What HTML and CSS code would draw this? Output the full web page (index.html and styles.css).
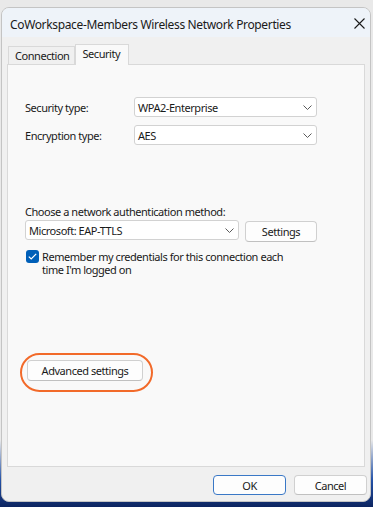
FILE: index.html
```html
<!DOCTYPE html>
<html>
<head>
<meta charset="utf-8">
<link rel="stylesheet" href="styles.css">
</head>
<body>
<div class="window">
  <div class="titlebar">
    <span class="title">CoWorkspace-Members Wireless Network Properties</span>
    <svg class="close" width="11" height="11" viewBox="0 0 11 11"><path d="M0.5 0.5 L10.5 10.5 M10.5 0.5 L0.5 10.5" stroke="#1b1b1b" stroke-width="1.1" fill="none"/></svg>
  </div>
  <div class="tabs">
    <div class="tab">Connection</div>
    <div class="tab active">Security</div>
  </div>
  <div class="panel">
    <div class="field-row">
      <span class="field-label">Security type:</span>
      <div class="select"><span>WPA2-Enterprise</span><svg class="chev" width="9" height="5" viewBox="0 0 9 5"><path d="M0.5 0.5 L4.5 4.5 L8.5 0.5" stroke="#5a5a5a" stroke-width="1" fill="none"/></svg></div>
    </div>
    <div class="field-row">
      <span class="field-label">Encryption type:</span>
      <div class="select"><span>AES</span><svg class="chev" width="9" height="5" viewBox="0 0 9 5"><path d="M0.5 0.5 L4.5 4.5 L8.5 0.5" stroke="#5a5a5a" stroke-width="1" fill="none"/></svg></div>
    </div>
    <div class="auth">
      <div class="auth-label">Choose a network authentication method:</div>
      <div class="auth-row">
        <div class="select wide"><span>Microsoft: EAP-TTLS</span><svg class="chev" width="9" height="5" viewBox="0 0 9 5"><path d="M0.5 0.5 L4.5 4.5 L8.5 0.5" stroke="#5a5a5a" stroke-width="1" fill="none"/></svg></div>
        <button class="btn settings">Settings</button>
      </div>
      <div class="check-row">
        <span class="checkbox"><svg width="9" height="7" viewBox="0 0 9 7"><path d="M0.8 3.6 L3.2 6 L8.2 0.9" stroke="#fff" stroke-width="1.2" fill="none"/></svg></span>
        <span class="check-text">Remember my credentials for this connection each time I'm logged on</span>
      </div>
    </div>
    <div class="advanced-wrap">
      <div class="highlight"><button class="btn advanced">Advanced settings</button></div>
    </div>
  </div>
  <div class="footer">
    <button class="btn primary">OK</button>
    <button class="btn">Cancel</button>
  </div>
</div>
</body>
</html>
```
FILE: styles.css
```css
html, body {
  margin: 0;
  padding: 0;
}
body {
  width: 373px;
  height: 507px;
  overflow: hidden;
  background: linear-gradient(to bottom, #e9e9e9 0, #e9e9e9 440px, #2452a8 480px, #0c2460 507px);
  font-family: "Noto Sans", "Open Sans", sans-serif;
  font-size: 11px;
  letter-spacing: -0.45px;
  color: #1a1a1a;
}
.window {
  box-sizing: border-box;
  margin: 7px 2px 0 1px;
  width: 370px;
  height: 495px;
  border: 1px solid #c4c4c4;
  border-radius: 8px;
  background: #f0f0f0;
  overflow: hidden;
  display: flex;
  flex-direction: column;
}
.titlebar {
  height: 29px;
  flex: none;
  background: #eef3f9;
  display: flex;
  align-items: center;
  justify-content: space-between;
  padding: 0 5px 0 8px;
}
.title {
  font-size: 12px;
  letter-spacing: -0.35px;
  color: #1a1a1a;
  padding-top: 3px;
}
.close {
  display: block;
  margin-top: 1px;
}
.tabs {
  height: 27px;
  flex: none;
  display: flex;
  align-items: flex-end;
  padding-left: 6px;
  position: relative;
  z-index: 1;
}
.tab {
  box-sizing: border-box;
  height: 18px;
  padding: 0 5px 0 6px;
  border: 1px solid #d9d9d9;
  border-bottom: none;
  background: #f0f0f0;
  display: flex;
  align-items: center;
}
.tab + .tab {
  border-left: none;
}
.tab.active {
  height: 21px;
  margin-bottom: -1px;
  background: #f9f9f9;
  padding: 0 8px 3px 6px;
  border-left: 1px solid #d9d9d9;
}
.panel {
  box-sizing: border-box;
  height: 403px;
  flex: none;
  margin: 0 5px;
  border: 1px solid #d9d9d9;
  background: #f9f9f9;
  padding: 32px 47px 0 17px;
}
.field-row {
  display: flex;
  align-items: center;
  height: 20px;
  margin-bottom: 8px;
}
.field-label {
  width: 109px;
  flex: none;
}
.select {
  box-sizing: border-box;
  flex: 1;
  height: 20px;
  background: #ffffff;
  border: 1px solid #d2d2d2;
  border-radius: 3px;
  display: flex;
  align-items: center;
  justify-content: space-between;
  padding: 0 4px 0 3px;
}
.chev {
  display: block;
}
.auth {
  margin-top: 59px;
}
.auth-label {
  height: 15px;
  line-height: 15px;
  margin-bottom: 1px;
}
.auth-row {
  display: flex;
  gap: 6px;
  align-items: flex-start;
}
.select.wide {
  flex: 1;
}
.btn {
  box-sizing: border-box;
  font-family: inherit;
  font-size: 11px;
  letter-spacing: -0.45px;
  color: #1a1a1a;
  background: #fdfdfd;
  border: 1px solid #d0d0d0;
  border-bottom-color: #c0c0c0;
  border-radius: 4px;
  height: 21px;
  padding: 0;
  margin: 0;
}
.settings {
  width: 72px;
  margin-top: 1px;
}
.check-row {
  display: flex;
  align-items: flex-start;
  gap: 3px;
  margin-top: 8px;
  padding-left: 1px;
}
.checkbox {
  box-sizing: border-box;
  width: 13px;
  height: 13px;
  flex: none;
  background: #005fb8;
  border-radius: 3px;
  display: flex;
  align-items: center;
  justify-content: center;
}
.check-text {
  width: 250px;
  line-height: 13px;
}
.advanced-wrap {
  margin-top: 77px;
  margin-left: -5px;
  display: flex;
}
.highlight {
  border: 2px solid #f26a2a;
  border-radius: 21px;
  padding: 5px 8px 9px 5px;
}
.advanced {
  width: 116px;
  display: block;
}
.footer {
  flex: 1;
  display: flex;
  justify-content: flex-end;
  gap: 8px;
  padding: 8px 3px 0 0;
}
.footer .btn {
  width: 73px;
  height: 20px;
}
.footer .btn.primary {
  border: 1px solid #3a78c6;
  border-radius: 4px;
}
```
